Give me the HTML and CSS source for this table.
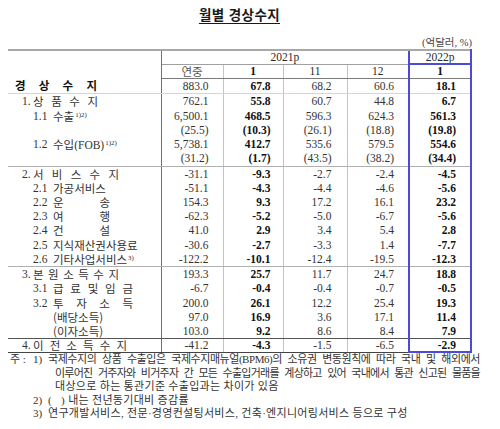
FILE: index.html
```html
<!DOCTYPE html>
<html lang="ko">
<head>
<meta charset="utf-8">
<title>월별 경상수지</title>
<link rel="stylesheet" href="styles.css">
</head>
<body>
<div class="page">
  <div class="title"><span class="tt">월별 경상수지</span></div>
  <div class="unit">(억달러, %)</div>
  <table class="tbl">
    <colgroup>
      <col class="c-lab"><col class="c-y"><col class="c-m"><col class="c-m11"><col class="c-m12"><col class="c-last">
    </colgroup>
    <thead>
      <tr class="h1">
        <th class="lab" rowspan="2"></th>
        <th class="yr" colspan="4">2021p</th>
        <th class="yr last boxtop">2022p</th>
      </tr>
      <tr class="h2">
        <th class="ko">연중</th>
        <th class="b">1</th>
        <th>11</th>
        <th class="sep12">12</th>
        <th class="b last">1</th>
      </tr>
    </thead>
    <tbody>
      <tr class="light t">
        <td class="lab"><div class="l"><span class="d w82 bold ml7">경 상 수 지</span></div></td>
        <td>883.0</td><td class="b">67.8</td><td>68.2</td><td>60.6</td><td class="b last">18.1</td>
      </tr>
      <tr class="t">
        <td class="lab"><div class="l lv1"><span class="no">1.</span><span class="d w65">상 품 수 지</span></div></td>
        <td>762.1</td><td class="b">55.8</td><td>60.7</td><td>44.8</td><td class="b last">6.7</td>
      </tr>
      <tr class="t">
        <td class="lab"><div class="l lv2"><span class="no">1.1</span><span>수출<sup class="s">1)2)</sup></span></div></td>
        <td>6,500.1</td><td class="b">468.5</td><td>596.3</td><td>624.3</td><td class="b last">561.3</td>
      </tr>
      <tr>
        <td class="lab"></td>
        <td>(25.5)</td><td class="b">(10.3)</td><td>(26.1)</td><td>(18.8)</td><td class="b last">(19.8)</td>
      </tr>
      <tr>
        <td class="lab"><div class="l lv2"><span class="no">1.2</span><span>수입<span class="lat">(FOB)</span><sup class="s">1)2)</sup></span></div></td>
        <td>5,738.1</td><td class="b">412.7</td><td>535.6</td><td>579.5</td><td class="b last">554.6</td>
      </tr>
      <tr class="grp t">
        <td class="lab"></td>
        <td>(31.2)</td><td class="b">(1.7)</td><td>(43.5)</td><td>(38.2)</td><td class="b last">(34.4)</td>
      </tr>
      <tr class="t">
        <td class="lab"><div class="l lv1"><span class="no">2.</span><span class="d w86">서 비 스 수 지</span></div></td>
        <td>-31.1</td><td class="b">-9.3</td><td>-2.7</td><td>-2.4</td><td class="b last">-4.5</td>
      </tr>
      <tr>
        <td class="lab"><div class="l lv2"><span class="no">2.1</span><span>가공서비스</span></div></td>
        <td>-51.1</td><td class="b">-4.3</td><td>-4.4</td><td>-4.6</td><td class="b last">-5.6</td>
      </tr>
      <tr>
        <td class="lab"><div class="l lv2"><span class="no">2.2</span><span class="d w57">운 송</span></div></td>
        <td>154.3</td><td class="b">9.3</td><td>17.2</td><td>16.1</td><td class="b last">23.2</td>
      </tr>
      <tr>
        <td class="lab"><div class="l lv2"><span class="no">2.3</span><span class="d w57">여 행</span></div></td>
        <td>-62.3</td><td class="b">-5.2</td><td>-5.0</td><td>-6.7</td><td class="b last">-5.6</td>
      </tr>
      <tr>
        <td class="lab"><div class="l lv2"><span class="no">2.4</span><span class="d w57">건 설</span></div></td>
        <td>41.0</td><td class="b">2.9</td><td>3.4</td><td>5.4</td><td class="b last">2.8</td>
      </tr>
      <tr class="t">
        <td class="lab"><div class="l lv2"><span class="no">2.5</span><span>지식재산권사용료</span></div></td>
        <td>-30.6</td><td class="b">-2.7</td><td>-3.3</td><td>1.4</td><td class="b last">-7.7</td>
      </tr>
      <tr class="grp">
        <td class="lab"><div class="l lv2"><span class="no">2.6</span><span>기타사업서비스<sup class="s">3)</sup></span></div></td>
        <td>-122.2</td><td class="b">-10.1</td><td>-12.4</td><td>-19.5</td><td class="b last">-12.3</td>
      </tr>
      <tr class="t">
        <td class="lab"><div class="l lv1"><span class="no">3.</span><span class="d w86">본 원 소 득 수 지</span></div></td>
        <td>193.3</td><td class="b">25.7</td><td>11.7</td><td>24.7</td><td class="b last">18.8</td>
      </tr>
      <tr>
        <td class="lab"><div class="l lv2"><span class="no">3.1</span><span class="d w80">급 료 및 임 금</span></div></td>
        <td>-6.7</td><td class="b">-0.4</td><td>-0.4</td><td>-0.7</td><td class="b last">-0.5</td>
      </tr>
      <tr class="t">
        <td class="lab"><div class="l lv2"><span class="no">3.2</span><span class="d w80">투 자 소 득</span></div></td>
        <td>200.0</td><td class="b">26.1</td><td>12.2</td><td>25.4</td><td class="b last">19.3</td>
      </tr>
      <tr>
        <td class="lab"><div class="l lv2"><span class="no"></span><span>(배당소득)</span></div></td>
        <td>97.0</td><td class="b">16.9</td><td>3.6</td><td>17.1</td><td class="b last">11.4</td>
      </tr>
      <tr class="dark">
        <td class="lab"><div class="l lv2"><span class="no"></span><span>(이자소득)</span></div></td>
        <td>103.0</td><td class="b">9.2</td><td>8.6</td><td>8.4</td><td class="b last">7.9</td>
      </tr>
      <tr class="end">
        <td class="lab"><div class="l lv1"><span class="no">4.</span><span class="d w94">이 전 소 득 수 지</span></div></td>
        <td>-41.2</td><td class="b">-4.3</td><td>-1.5</td><td>-6.5</td><td class="b last">-2.9</td>
      </tr>
    </tbody>
  </table>
  <div class="notes">
    <div class="nrow"><span class="nlbl">주 :</span><span class="nnum">1)</span><span class="ntxt just1">국제수지의 상품 수출입은 국제수지매뉴얼(BPM6)의 소유권 변동원칙에 따라 국내 및 해외에서</span></div>
    <div class="ncont just2">이루어진 거주자와 비거주자 간 모든 수출입거래를 계상하고 있어 국내에서 통관 신고된 물품을</div>
    <div class="ncont wide">대상으로 하는 통관기준 수출입과는 차이가 있음</div>
    <div class="nrow"><span class="nlbl"></span><span class="nnum">2)</span><span class="ntxt wide">(&nbsp;&nbsp;&nbsp;) 내는 전년동기대비 증감률</span></div>
    <div class="nrow"><span class="nlbl"></span><span class="nnum">3)</span><span class="ntxt wide">연구개발서비스, 전문·경영컨설팅서비스, 건축·엔지니어링서비스 등으로 구성</span></div>
  </div>
</div>
</body>
</html>
```
FILE: styles.css
```css
html, body {
  margin: 0;
  padding: 0;
  background: #ffffff;
}
body {
  color: #2a2a2a;
  font-family: "Liberation Serif", "Noto Sans CJK KR", serif;
}
.page {
  margin-left: 8px;
  width: 472px;
}
.title {
  width: 463px;
  height: 36px;
  box-sizing: border-box;
  padding-top: 5px;
  text-align: center;
  font-family: "Noto Sans CJK KR", sans-serif;
  font-weight: 700;
  font-size: 13.5px;
  line-height: 18px;
  color: #1a1a1a;
}
.tt {
  text-decoration: underline;
  text-underline-offset: 3px;
  text-decoration-thickness: 1px;
  letter-spacing: 0.4px;
}
.unit {
  width: 464px;
  height: 13px;
  line-height: 13px;
  text-align: right;
  font-size: 10.5px;
  color: #444;
}
.tbl {
  border-collapse: collapse;
  table-layout: fixed;
  width: 463px;
}
.c-lab { width: 153px; }
.c-y { width: 62px; }
.c-m { width: 60px; }
.c-m11 { width: 64px; }
.c-m12 { width: 62px; }
.c-last { width: 62px; }

.tbl th, .tbl td {
  padding: 0;
  font-size: 11.5px;
  white-space: nowrap;
  overflow: hidden;
  box-sizing: border-box;
}
.tbl th {
  font-weight: 400;
  text-align: center;
  border-right: 1px solid #c4c4c4;
}
.h1 th {
  height: 13px;
  line-height: 12px;
  border-top: 2px solid #a8a8a8;
}
.h1 .yr {
  border-bottom: 1px solid #a0a0a0;
  border-right: 1px solid #a0a0a0;
}
.h2 th {
  height: 14px;
  line-height: 12px;
  border-bottom: 1px solid #7a7a7a;
}
.tbl th.lab, .tbl td.lab {
  border-right: 1px solid #707070;
  text-align: left;
}
.h2 .sep12 {
  border-right: 1px solid #a0a0a0;
}
.ko {
  font-family: "Noto Sans CJK KR", sans-serif;
  font-size: 11px;
  color: #555;
}
.tbl td {
  height: 14px;
  line-height: 12px;
  text-align: right;
  padding-right: 14px;
  border-right: 1px solid #c4c4c4;
  color: #333;
}
.tbl tr.t td {
  height: 15px;
}
.tbl td:nth-child(3) {
  padding-right: 12px;
}
.tbl td:nth-child(4) {
  padding-right: 15px;
}
.tbl td:nth-child(5) {
  border-right: 1px solid #a0a0a0;
}
.tbl .b {
  font-weight: 700;
  color: #111;
}
.tbl .last {
  border-left: 2px solid #4b4bd8;
  border-right: 2px solid #4b4bd8;
}
.tbl .boxtop {
  border-bottom: 2px solid #4b4bd8;
}
.tbl td.lab {
  padding-right: 0;
}
tr.light td {
  border-bottom: 1px solid #d6d6d6;
}
tr.grp td {
  border-bottom: 1px solid #b0b0b0;
}
tr.dark td {
  border-bottom: 1px solid #555;
}
tr.end td {
  border-bottom: 1px solid #444;
}
tr.end td.last {
  border-bottom: 2px solid #4b4bd8;
}

.l {
  display: flex;
  align-items: center;
  height: 12px;
  font-family: "Noto Sans CJK KR", sans-serif;
  font-size: 11.5px;
  line-height: 12px;
  color: #333;
}
.l .no {
  font-family: "Liberation Serif", serif;
  font-size: 11.5px;
  flex: none;
}
.l.lv1 .no {
  margin-left: 14px;
  width: 11px;
}
.l.lv2 .no {
  margin-left: 25px;
  width: 20px;
}
.d {
  display: inline-block;
  flex: none;
  text-align: justify;
  text-align-last: justify;
}
.ml7 { margin-left: 7px; }
.w57 { width: 57px; }
.w65 { width: 65px; }
.w80 { width: 80px; }
.w82 { width: 82px; }
.w86 { width: 86px; }
.w94 { width: 94px; }
.bold {
  font-weight: 700;
  color: #111;
}
.lat {
  font-family: "Liberation Serif", serif;
}
.s {
  font-family: "Liberation Serif", serif;
  font-size: 7px;
  line-height: 0;
  vertical-align: 4px;
  margin-left: 1px;
}

.notes {
  width: 472px;
  font-family: "Liberation Serif", "Noto Sans CJK KR", serif;
  font-size: 11px;
  line-height: 13.6px;
  color: #333;
}
.nrow {
  display: flex;
  white-space: nowrap;
}
.nlbl {
  width: 25px;
  padding-left: 2px;
  box-sizing: border-box;
  flex: none;
}
.nnum {
  width: 15px;
  flex: none;
}
.ntxt {
  flex: 1;
  min-width: 0;
}
.ncont {
  padding-left: 47px;
  white-space: nowrap;
}
.wide {
  letter-spacing: 0.3px;
}
.just1 {
  text-align: justify;
  text-align-last: justify;
  letter-spacing: -0.45px;
}
.just2 {
  text-align: justify;
  text-align-last: justify;
  letter-spacing: -0.75px;
}
```
